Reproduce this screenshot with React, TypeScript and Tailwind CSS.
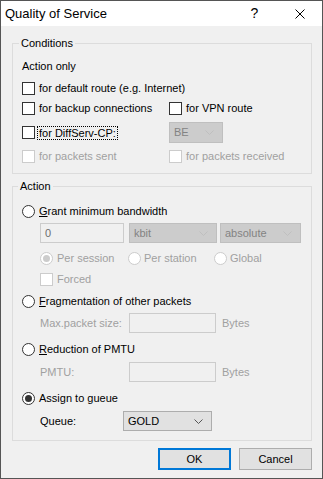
import React from "react";

const font = { fontFamily: '"Liberation Sans", Arial, sans-serif' };

function Checkbox({ disabled }: { disabled?: boolean }) {
    return (
        <span
            className={`block w-[13px] h-[13px] shrink-0 border bg-white ${disabled ? "border-[#cccccc]" : "border-[#333333]"}`}
        />
    );
}

function Radio({ checked, disabled }: { checked?: boolean; disabled?: boolean }) {
    return (
        <span
            className={`flex items-center justify-center w-[13px] h-[13px] shrink-0 rounded-full border bg-white ${disabled ? "border-[#cccccc]" : "border-[#333333]"}`}
        >
            {checked && (
                <span className={`block w-[7px] h-[7px] rounded-full ${disabled ? "bg-[#cccccc]" : "bg-[#333333]"}`} />
            )}
        </span>
    );
}

function Chevron({ color }: { color: string }) {
    return (
        <svg width="9" height="5" viewBox="0 0 9 5" className="shrink-0">
            <polyline points="0.5,0.5 4.5,4.5 8.5,0.5" fill="none" stroke={color} strokeWidth="1" />
        </svg>
    );
}

function Combo({ value, width, disabled, height = "h-[20px]" }: { value: string; width: string; disabled?: boolean; height?: string }) {
    return (
        <div
            className={`flex items-center justify-between pl-[4px] pr-[8px] border ${width} ${height} ${disabled ? "bg-[#cccccc] border-[#bfbfbf] text-[#838383]" : "bg-[#e1e1e1] border-[#adadad] text-black"}`}
        >
            <span>{value}</span>
            <Chevron color={disabled ? "#bfbfbf" : "#555555"} />
        </div>
    );
}

function Field({ value, width }: { value?: string; width: string }) {
    return (
        <div className={`flex items-center h-[20px] pl-[4px] border border-[#cccccc] bg-[#f0f0f0] text-[#6d6d6d] ${width}`}>
            {value}
        </div>
    );
}

export default function App() {
    return (
        <div className="w-[323px] h-[479px] border border-[#555555] bg-[#f0f0f0] flex flex-col text-[11px] leading-[13px] text-black" style={font}>
            {/* Title bar */}
            <div className="h-[25px] bg-white flex items-center shrink-0">
                <span className="pl-[4px] text-[13px]" style={{ fontFamily: '"Segoe UI", "Liberation Sans", sans-serif' }}>
                    Quality of Service
                </span>
                <div className="ml-auto w-[45px] h-full flex items-center justify-center text-[14px]">?</div>
                <div className="w-[45px] h-full flex items-center justify-center">
                    <svg width="10" height="10" viewBox="0 0 10 10">
                        <path d="M0.5 0.5 L9.5 9.5 M9.5 0.5 L0.5 9.5" stroke="#000" strokeWidth="1" />
                    </svg>
                </div>
            </div>

            <div className="flex flex-col pl-[11px]">
                {/* Conditions */}
                <fieldset className="mt-[11px] w-[300px] border border-[#dcdcdc] pl-[9px] pb-[9px]">
                    <legend className="ml-[-3px] px-[2px] leading-[13px]">Conditions</legend>
                    <div className="mt-[8px] h-[16px] flex items-center">Action only</div>
                    <div className="mt-[6px] h-[16px] flex items-center">
                        <Checkbox />
                        <span className="ml-[4px]">for default route (e.g. Internet)</span>
                    </div>
                    <div className="mt-[4px] h-[16px] flex items-center">
                        <div className="w-[147px] flex items-center">
                            <Checkbox />
                            <span className="ml-[4px]">for backup connections</span>
                        </div>
                        <Checkbox />
                        <span className="ml-[4px]">for VPN route</span>
                    </div>
                    <div className="mt-[6px] h-[21px] flex items-center">
                        <div className="w-[147px] flex items-center">
                            <Checkbox />
                            <span className="ml-[2px] px-[1px] border border-dotted border-black leading-[12px]">for DiffServ-CP:</span>
                        </div>
                        <Combo value="BE" width="w-[54px]" height="h-[21px]" disabled />
                    </div>
                    <div className="mt-[5px] h-[16px] flex items-center text-[#a0a0a0]">
                        <div className="w-[147px] flex items-center">
                            <Checkbox disabled />
                            <span className="ml-[4px]">for packets sent</span>
                        </div>
                        <Checkbox disabled />
                        <span className="ml-[4px]">for packets received</span>
                    </div>
                </fieldset>

                {/* Action */}
                <fieldset className="mt-[6px] w-[300px] border border-[#dcdcdc] pl-[9px] pb-[9px]">
                    <legend className="ml-[-4px] px-[2px] leading-[13px]">Action</legend>
                    <div className="mt-[10px] h-[16px] flex items-center">
                        <Radio />
                        <span className="ml-[4px]"><span className="underline underline-offset-1">G</span>rant minimum bandwidth</span>
                    </div>
                    <div className="mt-[4px] h-[20px] flex items-center pl-[18px] text-[#838383]">
                        <Field value="0" width="w-[84px]" />
                        <div className="ml-[5px]"><Combo value="kbit" width="w-[88px]" disabled /></div>
                        <div className="ml-[3px]"><Combo value="absolute" width="w-[81px]" disabled /></div>
                    </div>
                    <div className="mt-[7px] h-[16px] flex items-center pl-[18px] text-[#a0a0a0]">
                        <div className="w-[88px] flex items-center">
                            <Radio checked disabled />
                            <span className="ml-[4px]">Per session</span>
                        </div>
                        <div className="w-[86px] flex items-center">
                            <Radio disabled />
                            <span className="ml-[3px]">Per station</span>
                        </div>
                        <div className="flex items-center">
                            <Radio disabled />
                            <span className="ml-[3px]">Global</span>
                        </div>
                    </div>
                    <div className="mt-[5px] h-[16px] flex items-center pl-[18px] text-[#a0a0a0]">
                        <Checkbox disabled />
                        <span className="ml-[4px]">Forced</span>
                    </div>
                    <div className="mt-[6px] h-[16px] flex items-center">
                        <Radio />
                        <span className="ml-[4px]"><span className="underline underline-offset-1">F</span>ragmentation of other packets</span>
                    </div>
                    <div className="mt-[4px] h-[20px] flex items-center pl-[18px] text-[#a0a0a0]">
                        <span className="w-[89px]">Max.packet size:</span>
                        <Field width="w-[87px]" />
                        <span className="ml-[6px]">Bytes</span>
                    </div>
                    <div className="mt-[8px] h-[16px] flex items-center">
                        <Radio />
                        <span className="ml-[4px]"><span className="underline underline-offset-1">R</span>eduction of PMTU</span>
                    </div>
                    <div className="mt-[5px] h-[20px] flex items-center pl-[18px] text-[#a0a0a0]">
                        <span className="w-[89px]">PMTU:</span>
                        <Field width="w-[87px]" />
                        <span className="ml-[6px]">Bytes</span>
                    </div>
                    <div className="mt-[8px] h-[16px] flex items-center">
                        <Radio checked />
                        <span className="ml-[4px]">Assign to gueue</span>
                    </div>
                    <div className="mt-[5px] h-[20px] flex items-center pl-[18px]">
                        <span className="w-[83px]">Queue:</span>
                        <Combo value="GOLD" width="w-[89px]" />
                    </div>
                </fieldset>

                {/* Buttons */}
                <div className="mt-[7px] w-[300px] flex justify-end gap-[8px]">
                    <button className="w-[73px] h-[22px] bg-[#e1e1e1] border-2 border-[#0078d7] text-black">OK</button>
                    <button className="w-[73px] h-[22px] bg-[#e1e1e1] border border-[#adadad] text-black">Cancel</button>
                </div>
            </div>
        </div>
    );
}
